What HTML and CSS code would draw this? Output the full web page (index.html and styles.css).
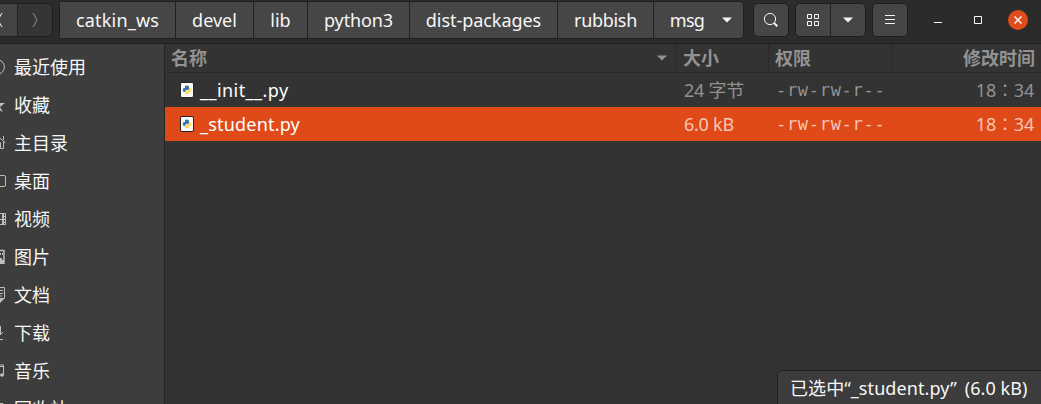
FILE: index.html
```html
<!DOCTYPE html>
<html lang="zh-CN">
<head>
<meta charset="utf-8">
<title>msg</title>
<link rel="stylesheet" href="styles.css">
</head>
<body>
<div class="window">
  <header class="toolbar">
    <div class="nav">
      <button class="nav-btn back"><svg width="18" height="32" viewBox="0 0 18 32"><path d="M2 9L-2 16L2 23" /></svg></button>
      <button class="nav-btn forward"><svg width="34" height="32" viewBox="0 0 34 32"><path d="M15 9L19 16L15 23" /></svg></button>
    </div>
    <nav class="path">
      <button class="crumb c1"><span>catkin_ws</span></button>
      <button class="crumb c2"><span>devel</span></button>
      <button class="crumb c3"><span>lib</span></button>
      <button class="crumb c4"><span>python3</span></button>
      <button class="crumb c5"><span>dist-packages</span></button>
      <button class="crumb c6"><span>rubbish</span></button>
      <button class="crumb c7"><span>msg</span><svg width="10" height="6" viewBox="0 0 10 6"><path class="fill" d="M0 .5H10L5 5.5Z"/></svg></button>
    </nav>
    <div class="group search"><button><svg width="16" height="16" viewBox="0 0 16 16"><circle cx="7" cy="7" r="5.6"/><path d="M11 11L14.3 14.3" stroke-width="2"/></svg></button></div>
    <div class="group view">
      <button><svg width="14" height="14" viewBox="0 0 14 14"><path d="M1.5 1.5h4v4h-4zM8.5 1.5h4v4h-4zM1.5 8.5h4v4h-4zM8.5 8.5h4v4h-4z"/></svg></button>
      <button><svg width="10" height="6" viewBox="0 0 10 6"><path class="fill" d="M0 .5H10L5 5.5Z"/></svg></button>
    </div>
    <div class="group menu"><button><svg width="10" height="10" viewBox="0 0 10 10"><path d="M0 .5H10M0 4.5H10M0 8.5H10"/></svg></button></div>
    <div class="controls">
      <button><svg width="20" height="20" viewBox="0 0 20 20"><path d="M6 12.5H14"/></svg></button>
      <button><svg width="20" height="20" viewBox="0 0 20 20"><path d="M6.5 6.5h7v7h-7z"/></svg></button>
      <button class="close"><svg width="20" height="20" viewBox="0 0 20 20"><path d="M6.5 6.5L13.5 13.5M13.5 6.5L6.5 13.5" stroke-width="1.5"/></svg></button>
    </div>
  </header>
  <div class="body">
    <aside class="sidebar">
      <a><svg width="8" height="18" viewBox="0 0 8 18"><circle cx="-3" cy="9" r="7.4"/></svg><span>最近使用</span></a>
      <a><svg width="8" height="18" viewBox="0 0 8 18"><path class="fill" d="M-3 1L-1 7H5L0 11L3 16L-3 13Z"/></svg><span>收藏</span></a>
      <a><svg width="8" height="18" viewBox="0 0 8 18"><path d="M-3 1.5L5.5 9M3.5 7V14.5H.5V8.5H-2M3.5 6V2"/></svg><span>主目录</span></a>
      <a><svg width="8" height="18" viewBox="0 0 8 18"><path d="M-1 3.5H4Q5.5 3.5 5.5 5V13Q5.5 14.5 4 14.5H-1"/></svg><span>桌面</span></a>
      <a><svg width="8" height="18" viewBox="0 0 8 18"><path d="M-1 3.5H5.5V14.5H-1M2.5 3V15M3.5 3V15M-1 9.5H2M3 6.5H5M3 9.5H5M3 12.5H5"/></svg><span>视频</span></a>
      <a><svg width="8" height="18" viewBox="0 0 8 18"><path d="M-1 2.5H4.5M4 2V16"  stroke-width="1.4"/><path class="fill" d="M0 5H1V7H0ZM2 5H3V7H2ZM0 12V10H2V12H4V16H0Z"/></svg><span>图片</span></a>
      <a><svg width="8" height="18" viewBox="0 0 8 18"><path d="M-1 1.5H4.5V12M0 4.5H3M0 7.5H3M0 10H2"/><path class="fill" d="M0 12H5L0 17Z"/></svg><span>文档</span></a>
      <a><svg width="8" height="18" viewBox="0 0 8 18"><path d="M.5 2V10M-1 8L0 11L3 8M0 15.5H3"/></svg><span>下载</span></a>
      <a><svg width="8" height="18" viewBox="0 0 8 18"><path d="M-1 3H3.5V13M-1 4.5H3"/><ellipse class="fill" cx="2" cy="13" rx="2" ry="1.7"/></svg><span>音乐</span></a>
      <a><svg width="8" height="18" viewBox="0 0 8 18"><path d="M-1 3.5H3V14.5"/></svg><span>回收站</span></a>
    </aside>
    <main class="files">
      <div class="row head">
        <div class="name"><span>名称</span><svg width="10" height="6" viewBox="0 0 10 6"><path class="fill" d="M0 .5H10L5 5.5Z"/></svg></div>
        <div class="size">大小</div><div class="perm">权限</div><div class="time">修改时间</div>
      </div>
      <div class="row">
        <div class="name"><svg class="py" width="14" height="16" viewBox="0 0 14 16"><rect class="paper" x=".5" y=".5" width="13" height="15" rx="1.5"/><path class="blue" d="M5 4Q7 3 9 4.500V7Q9 8 7 8Q5 8 5 10H3.500Q2 8 3.500 6H5Z"/><path class="yellow" d="M9.500 6H11Q12 8 10.500 10H9V11.500Q7 13 5 11.500V9.500Q5 8.500 7 8.500Q9.500 8.500 9.500 6Z"/></svg><span class="file1">__init__.py</span></div>
        <div class="size">24 字节</div><div class="perm">-rw-rw-r--</div><div class="time">18∶34</div>
      </div>
      <div class="row selected">
        <div class="name"><svg class="py" width="14" height="16" viewBox="0 0 14 16"><rect class="paper" x=".5" y=".5" width="13" height="15" rx="1.5"/><path class="blue" d="M5 4Q7 3 9 4.500V7Q9 8 7 8Q5 8 5 10H3.500Q2 8 3.500 6H5Z"/><path class="yellow" d="M9.500 6H11Q12 8 10.500 10H9V11.500Q7 13 5 11.500V9.500Q5 8.500 7 8.500Q9.500 8.500 9.500 6Z"/></svg><span class="file2">_student.py</span></div>
        <div class="size">6.0 kB</div><div class="perm">-rw-rw-r--</div><div class="time">18∶34</div>
      </div>
      <div class="status"><span>已选中“_student.py”</span><span class="amount">(6.0 kB)</span></div>
    </main>
  </div>
</div>
</body>
</html>
```
FILE: styles.css
```css
* { box-sizing: border-box; }
body { margin: 0; overflow: hidden; font: 18px/24px "Noto Sans", "Noto Sans CJK SC", sans-serif; color: #f7f7f7; background: #333; }
.window { width: 1041px; height: 404px; display: flex; flex-direction: column; overflow: hidden; }
button { border: 0; margin: 0; padding: 0; background: none; color: inherit; font: inherit; display: flex; align-items: center; justify-content: center; }
svg { display: block; flex: none; fill: none; stroke: currentColor; }
.fill { fill: currentColor; stroke: none; }
.toolbar { height: 44px; flex: none; display: flex; background: #2b2b2b; border-bottom: 1px solid #202020; }
.nav { display: flex; height: 34px; margin-top: 3px; width: 53px; border: 1px solid #1f1f1f; border-left: 0; border-radius: 0 5px 5px 0; overflow: hidden; }
.back { width: 18px; background: #444; border-right: 1px solid #222; }
.forward { width: 34px; background: #353535; color: #929292; }
.path { display: flex; width: 685px; height: 38px; margin: 1px 0 0 6px; border: 1px solid #1f1f1f; border-radius: 0 5px 5px 0; overflow: hidden; }
.crumb { background: #464646; border-right: 1px solid #222; flex: none; white-space: nowrap; padding-bottom: 1px; }
.crumb:last-child { border-right: 0; }
.c1 { width: 116px; letter-spacing: .2px; }
.c2 { width: 78px; }
.c3 { width: 54px; }
.c4 { width: 102px; letter-spacing: -.1px; }
.c5 { width: 148px; letter-spacing: -.05px; }
.c6 { width: 96px; letter-spacing: -.3px; }
.c7 { width: 89px; gap: 18px; padding-left: 5px; letter-spacing: -.7px; }
.group { display: flex; height: 34px; margin-top: 3px; border: 1px solid #1f1f1f; border-radius: 5px; overflow: hidden; background: #464646; }
.group button { flex: 1; }
.group button + button { border-left: 1px solid #222; }
.search { width: 36px; margin-left: 9px; }
.view { width: 71px; margin-left: 6px; }
.menu { width: 36px; margin-left: 6px; }
.controls { display: flex; gap: 20px; margin: 10px 0 0 20px; height: 20px; }
.close { background: #e04c1a; border-radius: 50%; }
.body { flex: 1; min-height: 0; display: flex; }
.sidebar { width: 165px; background: #3d3d3d; border-right: 1px solid #252525; padding-top: 4px; overflow: hidden; }
.sidebar a { display: flex; height: 38px; align-items: center; gap: 6px; }
.sidebar svg { color: #bebebe; }
.files { flex: 1; display: flex; flex-direction: column; background: #333; }
.row { display: grid; grid-template-columns: 512px 92px 124px 148px; height: 34px; align-items: center; color: #929292; }
.row > div { padding-left: 7px; height: 100%; display: flex; align-items: center; white-space: nowrap; }
.row > .time { padding: 0 7px 0 0; justify-content: flex-end; letter-spacing: -.2px; }
.row .name { padding-left: 15px; color: #fff; }
.head { height: 29px; border-bottom: 1px solid #292929; font-weight: 700; padding-bottom: 0; }
.head > div { border-right: 1px solid #292929; }
.head > .time { border: 0; padding-right: 6px; letter-spacing: 0; }
.head > .size, .head > .perm { padding-left: 6px; }
.head .name { padding: 0 9px 0 6px; justify-content: space-between; color: #929292; }
.row .size { letter-spacing: -.25px; }
.head .size { letter-spacing: 0; }
.row:not(.head) .perm { font: 17px "DejaVu Sans Mono", monospace; letter-spacing: .7px; padding-left: 7px; }
.py { margin-right: 6px; }
.paper { fill: #fafafa; stroke: #252525; }
.blue { fill: #3875ac; stroke: none; }
.yellow { fill: #fbdc62; stroke: none; }
.selected, .selected .name { background: #e04a18; color: #fff; }
.selected .size, .selected .perm, .selected .time { color: #f6c5b4; }
.file1 { letter-spacing: .45px; }
.file2 { letter-spacing: .2px; }
.status { margin: auto 0 0 auto; width: 264px; height: 34px; background: #3c3c3c; border: 1px solid #202020; border-width: 1px 0 0 1px; border-radius: 5px 0 0; padding-left: 12px; display: flex; align-items: center; gap: 8px; white-space: nowrap; letter-spacing: .08px; }
```
